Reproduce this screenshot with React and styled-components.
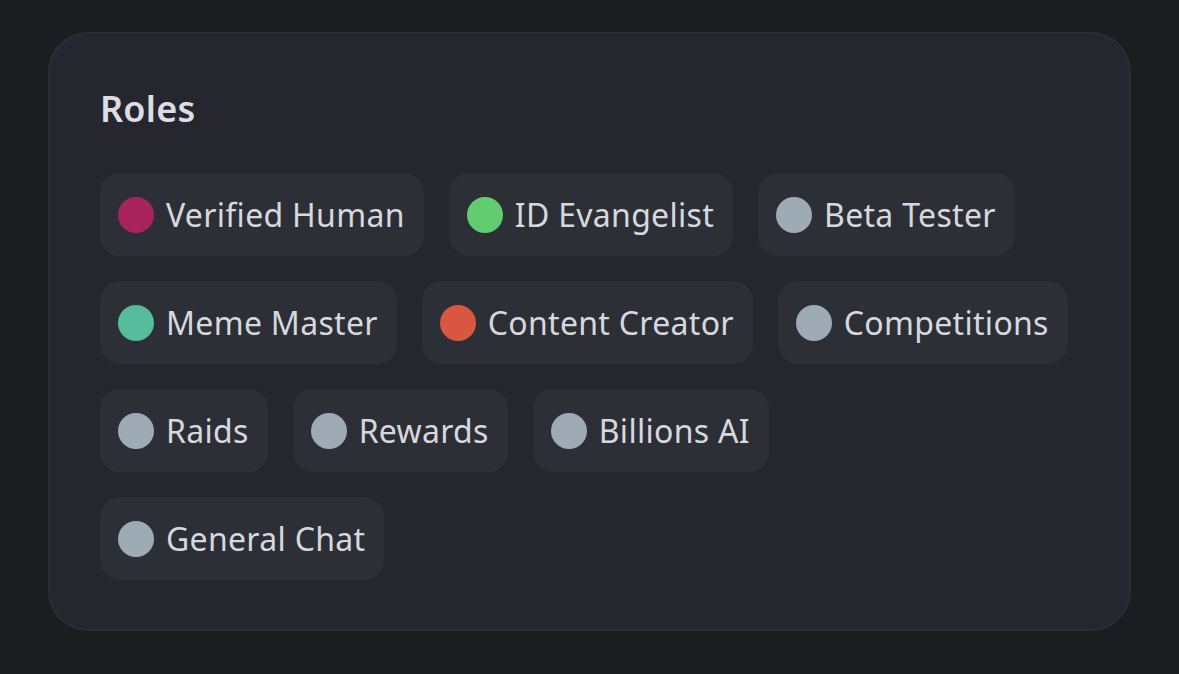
import React from "react";
import styled, { createGlobalStyle } from "styled-components";

const GlobalStyle = createGlobalStyle`
  html, body {
    margin: 0;
    padding: 0;
    background: #1c1d21;
  }
  body {
    font-family: "Noto Sans", "Open Sans", sans-serif;
  }
`;

const Page = styled.div`
  width: 1179px;
  height: 674px;
  box-sizing: border-box;
  padding: 32px 48px 0 48px;
`;

const Card = styled.section`
  box-sizing: border-box;
  width: 1083px;
  height: 599px;
  background: #25262e;
  border: 2px solid #2c2d34;
  border-radius: 40px;
  padding: 48px 50px 0 50px;
`;

const Title = styled.h2`
  margin: 0 0 37px 0;
  font-size: 36px;
  line-height: 54px;
  font-weight: 600;
  letter-spacing: 0.2px;
  color: #dbdde2;
`;

const RoleList = styled.div`
  display: flex;
  flex-wrap: wrap;
  gap: 25px 25px;
  max-width: 975px;
`;

const Chip = styled.div`
  display: flex;
  align-items: center;
  gap: 12px;
  height: 83px;
  box-sizing: border-box;
  padding: 0 19px 0 18px;
  background: #2d2f37;
  border-radius: 20px;
`;

const Dot = styled.span`
  width: 36px;
  height: 36px;
  border-radius: 50%;
  flex: none;
  background: ${(props) => props.color};
`;

const Label = styled.span`
  font-size: 32px;
  letter-spacing: 0.3px;
  color: #d6d8de;
  white-space: nowrap;
`;

const roles = [
  { name: "Verified Human", color: "#a8245c" },
  { name: "ID Evangelist", color: "#61cc70" },
  { name: "Beta Tester", color: "#9eabb4" },
  { name: "Meme Master", color: "#55bc9c" },
  { name: "Content Creator", color: "#d95641" },
  { name: "Competitions", color: "#9eabb4" },
  { name: "Raids", color: "#9eabb4" },
  { name: "Rewards", color: "#9eabb4" },
  { name: "Billions AI", color: "#9eabb4" },
  { name: "General Chat", color: "#9eabb4" },
];

function App() {
  return (
    <Page>
      <GlobalStyle />
      <Card>
        <Title>Roles</Title>
        <RoleList>
          {roles.map((role) => (
            <Chip key={role.name}>
              <Dot color={role.color} />
              <Label>{role.name}</Label>
            </Chip>
          ))}
        </RoleList>
      </Card>
    </Page>
  );
}

export default App;
